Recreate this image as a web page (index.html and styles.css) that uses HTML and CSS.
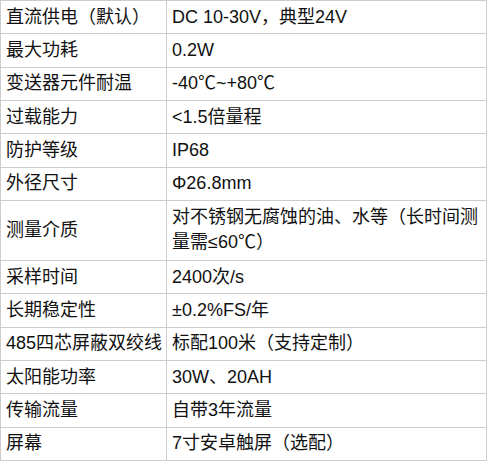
FILE: index.html
```html
<!DOCTYPE html>
<html lang="zh-CN">
<head>
<meta charset="utf-8">
<link rel="stylesheet" href="styles.css">
</head>
<body>
<table class="spec">
  <colgroup><col class="c-key"><col class="c-val"></colgroup>
  <tbody>
    <tr><td>直流供电（默认）</td><td>DC 10-30V，典型24V</td></tr>
    <tr><td>最大功耗</td><td>0.2W</td></tr>
    <tr><td>变送器元件耐温</td><td>-40℃~+80℃</td></tr>
    <tr><td>过载能力</td><td>&lt;1.5倍量程</td></tr>
    <tr><td>防护等级</td><td>IP68</td></tr>
    <tr><td>外径尺寸</td><td>Φ26.8mm</td></tr>
    <tr class="tall"><td>测量介质</td><td>对不锈钢无腐蚀的油、水等（长时间测<br>量需≤60℃）</td></tr>
    <tr><td>采样时间</td><td>2400次/s</td></tr>
    <tr><td>长期稳定性</td><td>±0.2%FS/年</td></tr>
    <tr><td>485四芯屏蔽双绞线</td><td>标配100米（支持定制）</td></tr>
    <tr><td>太阳能功率</td><td>30W、20AH</td></tr>
    <tr><td>传输流量</td><td>自带3年流量</td></tr>
    <tr><td>屏幕</td><td>7寸安卓触屏（选配）</td></tr>
  </tbody>
</table>
</body>
</html>
```
FILE: styles.css
```css
html, body {
  margin: 0;
  padding: 0;
  background: #ffffff;
}
.spec {
  border-collapse: collapse;
  width: 486px;
  table-layout: fixed;
  font-family: "Liberation Sans", "Noto Sans CJK SC", sans-serif;
  font-size: 18px;
  color: #111111;
}
.c-key { width: 166px; }
.c-val { width: 320px; }
.spec td {
  border: 1px solid #cccccc;
  height: 32.33px;
  padding: 0 4px 0 5px;
  line-height: 25px;
  vertical-align: middle;
}
.spec td:first-child {
  white-space: nowrap;
}
.spec tr.tall td {
  height: 59px;
}
```
